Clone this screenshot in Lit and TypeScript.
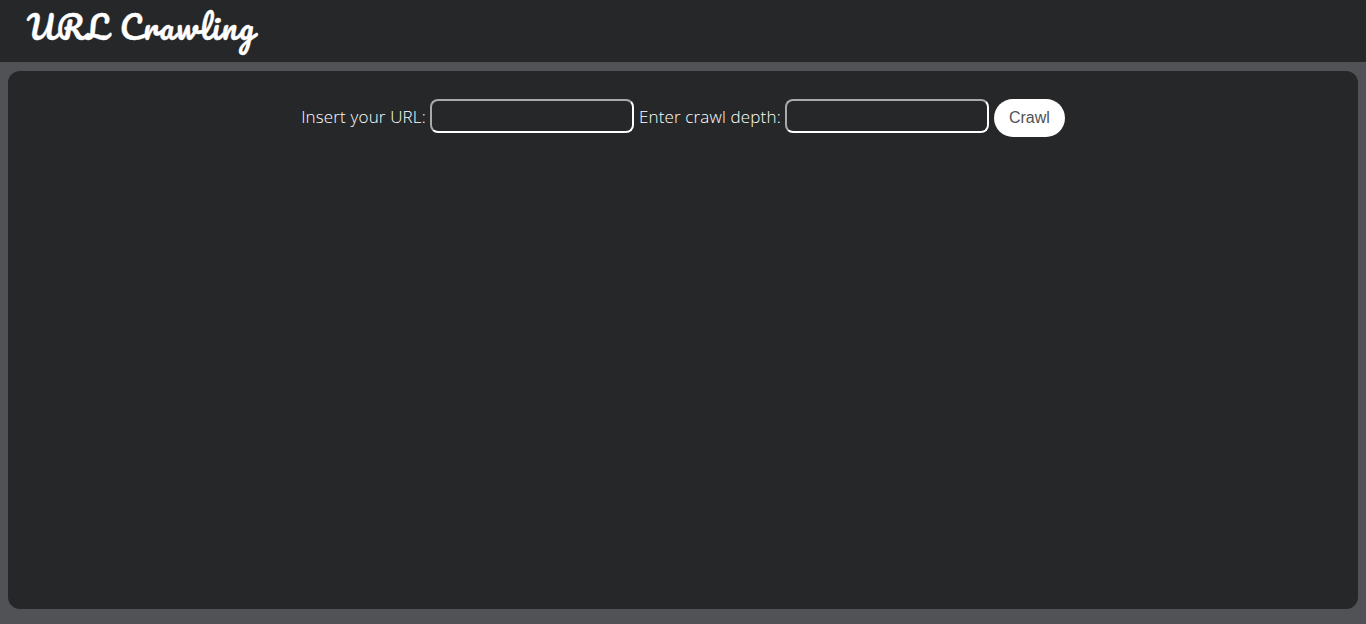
import { LitElement, html, css } from "lit";
import { customElement } from "lit/decorators.js";

@customElement("app-root")
export class AppRoot extends LitElement {
  static styles = css`
    :host {
      display: flex;
      flex-direction: column;
      height: 100vh;
      box-sizing: border-box;
      background: #505255;
      color: #fff;
      font: 300 17px/24px "Open Sans", sans-serif;
    }
    header {
      flex: none;
      height: 62px;
      box-sizing: border-box;
      padding: 0 27px;
      background: #262729;
    }
    h1 {
      margin: 0;
      font: 400 32px/52px "Pacifico", cursive;
      white-space: nowrap;
      -webkit-text-stroke: 0.3px #fff;
    }
    .lead {
      letter-spacing: 1px;
      word-spacing: 2px;
    }
    .tail {
      letter-spacing: 1.55px;
    }
    main {
      flex: 1;
      margin: 9px 8px 15px;
      padding-top: 28px;
      border-radius: 12px;
      background: #262729;
    }
    form {
      display: flex;
      justify-content: center;
      align-items: flex-start;
      gap: 5px;
    }
    label {
      display: flex;
      align-items: flex-start;
      gap: 4px;
      white-space: nowrap;
    }
    .caption {
      padding-top: 6px;
      letter-spacing: 0.16px;
    }
    input {
      width: 204px;
      height: 34px;
      box-sizing: border-box;
      margin: 0;
      padding: 4px 8px;
      border: 2px solid;
      border-color: #a9aaac #fff #fff #a9aaac;
      border-radius: 8px;
      outline: none;
      background: transparent;
      color: #fff;
      font: inherit;
    }
    button {
      width: 71px;
      height: 38px;
      margin: 0;
      padding: 0;
      border: 0;
      border-radius: 19px;
      background: #fff;
      color: #505255;
      font: 400 16px/36px "Liberation Sans", Arial, sans-serif;
    }
  `;

  render() {
    return html`
      <header>
        <h1><span class="lead">URL </span><span class="tail">Crawling</span></h1>
      </header>
      <main>
        <form @submit=${(e: Event) => e.preventDefault()}>
          <label><span class="caption">Insert your URL:</span><input type="text" /></label>
          <label><span class="caption">Enter crawl depth:</span><input type="text" /></label>
          <button type="submit">Crawl</button>
        </form>
      </main>
    `;
  }
}
